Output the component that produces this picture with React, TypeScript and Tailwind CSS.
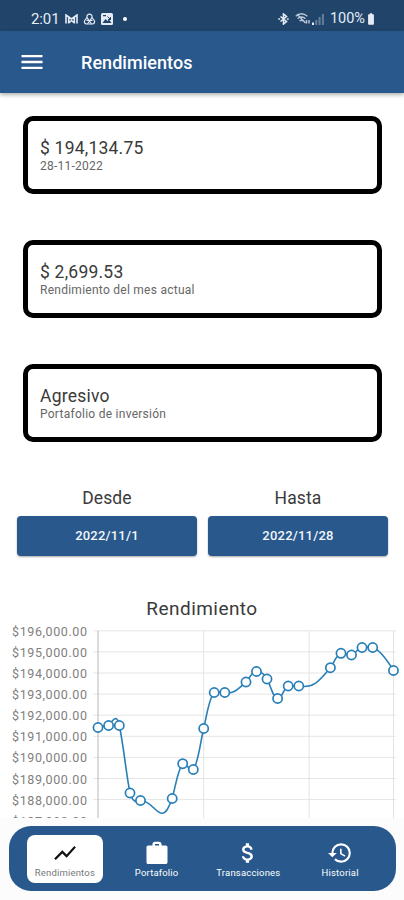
import {
  MdAttachMoney,
  MdBatteryFull,
  MdHistory,
  MdMenu,
  MdShowChart,
} from "react-icons/md";
import clsx from "clsx";

const summary = [
  { value: "$ 194,134.75", label: "28-11-2022", spacing: "tracking-[0.25px]" },
  { value: "$ 2,699.53", label: "Rendimiento del mes actual", spacing: "tracking-[0.26px]" },
  { value: "Agresivo", label: "Portafolio de inversión", spacing: "tracking-[0.26px]" },
];

const ranges = [
  { label: "Desde", date: "2022/11/1" },
  { label: "Hasta", date: "2022/11/28" },
];

const points = [
  [98, 107.5], [108.6, 105.5], [119.3, 105.5], [130, 173], [140.5, 180.5],
  [172.2, 178.5], [182.7, 143.7], [193.3, 149.5], [203.7, 108.5], [214.2, 72.5],
  [224.8, 72.5], [246, 62], [256.5, 51.5], [267, 59], [277.6, 78.5],
  [288.2, 66], [298.8, 66], [330.4, 47.7], [341, 33.3], [351.5, 35],
  [362, 27.5], [372.7, 27.5], [393.5, 50.5],
];

const curve =
  "M98 107.5 C102 106.5 105 106 108.6 105.5 C112 102 113 98.5 116 98.5 C118 99 118.5 102 119.3 105.5 C124 128 126 153 130 173 C131.5 178 134 184 140.5 180.5 C150 180 156 193.3 162 193.3 C167 193 169 186 172.2 178.5 C176 164 178 149 182.7 143.7 C186 141.5 190 153 193.3 149.5 C198 144 200 124 203.7 108.5 C207 94 209 78 214.2 72.5 C217 71.5 221 72.5 224.8 72.5 C234 74.5 239 68 246 62 C249 59 252 51.5 256.5 51.5 C260 51.5 264 53 267 59 C271 66 273 78.5 277.6 78.5 C282 79 284 67 288.2 66 C291 65.5 295 66 298.8 66 C314 69 320 60 330.4 47.7 C334 43 336 35 341 33.3 C344 32.5 348 36 351.5 35 C355 34 358 28 362 27.5 C365 27 369 27 372.7 27.5 C379 29 387 40 393.5 50.5";

function BriefcaseIcon({ className }: { className?: string }) {
  return (
    <svg viewBox="0 0 24 24" className={className} fill="currentColor">
      <path d="M4 5h3.8V4c0-1.5.9-2.5 2.4-2.5h3.6c1.5 0 2.4 1 2.4 2.5v1H20c1 0 1.7.7 1.7 1.7v13.8c0 1-.7 1.7-1.7 1.7H4c-1 0-1.7-.7-1.7-1.7V6.7C2.3 5.7 3 5 4 5Zm6.1 0h3.8V3.6h-3.8Z" />
    </svg>
  );
}

const tabs = [
  { label: "Rendimientos", icon: MdShowChart, active: true },
  { label: "Portafolio", icon: BriefcaseIcon },
  { label: "Transacciones", icon: MdAttachMoney },
  { label: "Historial", icon: MdHistory },
];

function StatusBar() {
  return (
    <div className="flex h-[31px] shrink-0 items-center bg-[#20446a] pt-[7px] pr-[27px] pl-[31px] text-[#e5ecf5]">
      <span className="w-[34px] text-[15px] leading-none tracking-[-0.1px]">2:01</span>
      <svg className="h-[10px] w-[13px]" viewBox="0 0 13 10" fill="none" stroke="currentColor" strokeWidth="1.6">
        <path d="M1 9.5V1l5.5 4L12 1v8.5M3.7 9.5V3.5M9.3 9.5V3.5M3.7 9l2.8-2.5L9.3 9" />
      </svg>
      <svg className="ml-[5px] h-[12px] w-[13px]" viewBox="0 0 13 12" fill="none" stroke="currentColor" strokeWidth="1.2">
        <path d="M4 4.5a2.6 2.6 0 1 1 5 0l2.4 3.2A2.3 2.3 0 0 1 9.5 11h-6a2.3 2.3 0 0 1-1.9-3.3Z" />
        <path d="M4 4.5 8.5 11M9 4.5 4.5 11M3.5 7.3h6" />
      </svg>
      <svg className="ml-[5px] size-[12px]" viewBox="0 0 12 12">
        <rect width="12" height="12" rx="1.5" fill="currentColor" />
        <path d="M1.5 10 4.5 6l2 2 1.5-1.5 2.5 3.5ZM2 2h3v1.3H2Z" fill="#20446a" />
        <path d="m6.5 3.5 3 3M9.5 4v2.5H7" fill="none" stroke="#20446a" />
      </svg>
      <span className="ml-[10px] size-[4px] rounded-full bg-white" />
      <div className="ml-auto flex items-center">
        <svg className="h-[12px] w-[11px]" viewBox="0 0 11 12" fill="none" stroke="currentColor" strokeWidth="1.6">
          <path d="m2.5 3.5 6 5L5.5 11V1l3 2.5-6 5" />
          <path d="M.3 6h1.8M8.9 6h1.8" />
        </svg>
        <svg className="ml-[6px] h-[12px] w-[16px] opacity-80" viewBox="0 0 16 12" fill="none" stroke="currentColor" strokeWidth="1.4">
          <path d="M.7 3.2c3.6-3 8-3 11.6 0M2.6 5.6c2.5-2 5.3-2 7.8 0M4.6 8c1.3-1 2.5-1 3.8 0M2 1l8.5 9" />
          <path d="M11.5 10.5V7M14 7v3.5" />
        </svg>
        <svg className="ml-px h-[11px] w-[12px]" viewBox="0 0 12 11" fill="currentColor">
          <path d="M0 8.5h2V11H0Z" />
          <path d="M3.3 6h2v5h-2ZM6.6 3h2v8h-2ZM9.9 0h2v11h-2Z" opacity=".35" />
        </svg>
        <span className="ml-[6px] text-[14.5px] leading-none">100%</span>
        <MdBatteryFull className="-mx-px size-[14px]" />
      </div>
    </div>
  );
}

function SummaryCard({ value, label, spacing }: (typeof summary)[number]) {
  return (
    <div className="h-[78px] rounded-[10px] border-[5px] border-black bg-white pt-[17px] pl-3">
      <p className="text-[17.5px] leading-[20px] tracking-[0.22px] text-[#3a3a3a]">{value}</p>
      <p className={clsx("text-[12px] leading-[16px] text-[#666]", spacing)}>{label}</p>
    </div>
  );
}

function Chart() {
  return (
    <svg className="block h-[198px] w-full" viewBox="0 0 404 198">
      {Array.from({ length: 10 }, (_, i) => {
        const y = 9.8 + i * 21.1;
        return (
          <g key={i}>
            <path d={`M93 ${y}H396`} stroke="#e5e5e5" />
            <text x="87" y={y + 5} textAnchor="end" textLength="75" fontSize="12.5" fill="#808080">
              {`$${196 - i},000.00`}
            </text>
          </g>
        );
      })}
      <path d="M98 9.8V198" stroke="#b8b8b8" />
      <path d="M203.7 9.8V198M309.1 9.8V198M393.5 9.8V198" stroke="#e3e3e3" />
      <g transform="translate(0 -1)">
        <path d={curve} fill="none" stroke="#287fb8" strokeWidth="1.6" />
        {points.map(([x, y]) => (
          <circle key={x} cx={x} cy={y} r="4.6" fill="#fff" stroke="#287fb8" strokeWidth="1.7" />
        ))}
      </g>
    </svg>
  );
}

function BottomNav() {
  return (
    <nav className="flex h-[82px] shrink-0 items-start bg-[#fcfcfc] pt-[8px] pr-[8px] pl-[9px]">
      <div className="flex h-[65px] w-full items-center rounded-[22px] bg-[#28588c] px-[10px]">
        {tabs.map(({ label, icon: Icon, active }) => (
          <div key={label} className="flex flex-1 justify-center">
            <div
              className={clsx(
                "flex h-[48px] w-[76px] flex-col items-center rounded-lg pt-[5px]",
                active ? "bg-white text-[#777]" : "text-white",
              )}
            >
              <Icon className={clsx("size-[26px] shrink-0", active && "text-[#111]")} />
              <span className="mt-px text-[9.5px] leading-[11px] tracking-[0.18px]">{label}</span>
            </div>
          </div>
        ))}
      </div>
    </nav>
  );
}

export default function App() {
  return (
    <div className="flex h-[900px] w-full flex-col overflow-hidden bg-white font-[Roboto,sans-serif]">
      <StatusBar />
      <header className="z-10 flex h-[62px] shrink-0 items-center bg-[#28588c] pl-[18px] text-white shadow-[0_2px_4px_rgba(0,0,0,0.3)]">
        <MdMenu className="size-[28px]" />
        <h1 className="ml-[35px] text-[18px] font-medium tracking-[0.05px]">Rendimientos</h1>
      </header>

      <main className="flex-1 overflow-hidden">
        <div className="flex flex-col gap-[46px] pt-[23px] pr-[22px] pl-[23px]">
          {summary.map((item) => (
            <SummaryCard key={item.value} {...item} />
          ))}
        </div>

        <div className="mt-[45px] grid grid-cols-2 gap-[11px] pr-[16px] pl-[17px] text-center">
          {ranges.map(({ label, date }) => (
            <div key={label}>
              <p className="text-[17.5px] leading-[22px] tracking-[0.1px] text-[#3a3a3a]">{label}</p>
              <button className="mt-[7px] h-[40px] w-full rounded-[4px] bg-[#28588c] text-[13px] font-medium tracking-[0.2px] text-[#f3f6fa] shadow-[0_1px_2px_rgba(0,0,0,0.35)]">
                {date}
              </button>
            </div>
          ))}
        </div>

        <h2 className="mt-[41px] text-center text-[19px] leading-[24px] tracking-[0.45px] text-[#3a3a3a]">Rendimiento</h2>
        <Chart />
      </main>

      <BottomNav />
    </div>
  );
}
